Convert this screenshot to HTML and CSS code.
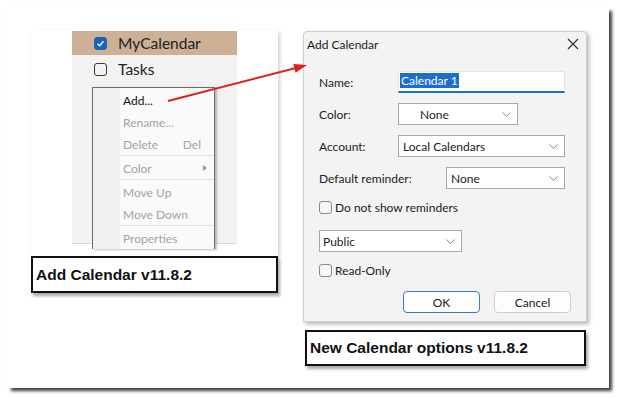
FILE: index.html
```html
<!DOCTYPE html>
<html lang="en">

<head>
    <meta charset="UTF-8">
    <meta name="viewport" content="width=device-width, initial-scale=1.0">
    <title>Add Calendar</title>
    <link rel="stylesheet" href="styles.css">
</head>

<body>
    <div class="sheet">
        <!-- Left: calendar list with context menu -->
        <div class="col col-left">
            <div class="card">
                <div class="panel">
                    <div class="cal-row selected">
                        <span class="check on">
                            <svg width="9" height="9" viewBox="0 0 9 9"><polyline points="1.5,4.8 3.6,6.8 7.5,2.2" fill="none" stroke="#fff" stroke-width="1.4"/></svg>
                        </span>
                        <span>MyCalendar</span>
                    </div>
                    <div class="cal-row tasks">
                        <span class="check"></span>
                        <span>Tasks</span>
                    </div>
                    <div class="menu">
                        <div class="menu-item active">Add...</div>
                        <div class="menu-item">Rename...</div>
                        <div class="menu-item">Delete <span class="shortcut">Del</span></div>
                        <div class="menu-sep"></div>
                        <div class="menu-item">Color <span class="submenu"></span></div>
                        <div class="menu-sep"></div>
                        <div class="menu-item">Move Up</div>
                        <div class="menu-item">Move Down</div>
                        <div class="menu-sep"></div>
                        <div class="menu-item">Properties</div>
                    </div>
                </div>
            </div>
            <div class="caption">Add Calendar v11.8.2</div>
        </div>

        <!-- Right: Add Calendar dialog -->
        <div class="col col-right">
            <div class="dialog">
                <div class="dialog-title">
                    <span>Add Calendar</span>
                    <svg width="12" height="12" viewBox="0 0 12 12"><path d="M1 1 L11 11 M11 1 L1 11" stroke="#333" stroke-width="1.2"/></svg>
                </div>
                <div class="dialog-body">
                    <div class="field row-name">
                        <label>Name:</label>
                        <div class="input"><span class="sel">Calendar 1</span></div>
                    </div>
                    <div class="field">
                        <label>Color:</label>
                        <div class="select select-color"><span>None</span><svg class="chev" width="9" height="5" viewBox="0 0 9 5"><polyline points="0.5,0.5 4.5,4.3 8.5,0.5" fill="none" stroke="#888"/></svg></div>
                    </div>
                    <div class="field">
                        <label>Account:</label>
                        <div class="select select-wide"><span>Local Calendars</span><svg class="chev" width="9" height="5" viewBox="0 0 9 5"><polyline points="0.5,0.5 4.5,4.3 8.5,0.5" fill="none" stroke="#888"/></svg></div>
                    </div>
                    <div class="field row-reminder">
                        <label class="label-long">Default reminder:</label>
                        <div class="select select-reminder"><span>None</span><svg class="chev" width="9" height="5" viewBox="0 0 9 5"><polyline points="0.5,0.5 4.5,4.3 8.5,0.5" fill="none" stroke="#888"/></svg></div>
                    </div>
                    <div class="field row-check1">
                        <span class="box"></span><span>Do not show reminders</span>
                    </div>
                    <div class="field row-public">
                        <div class="select select-public"><span>Public</span><svg class="chev" width="9" height="5" viewBox="0 0 9 5"><polyline points="0.5,0.5 4.5,4.3 8.5,0.5" fill="none" stroke="#888"/></svg></div>
                    </div>
                    <div class="field row-check2">
                        <span class="box"></span><span>Read-Only</span>
                    </div>
                    <div class="buttons">
                        <button class="btn btn-ok">OK</button>
                        <button class="btn">Cancel</button>
                    </div>
                </div>
            </div>
            <div class="caption caption-right">New Calendar options v11.8.2</div>
        </div>

        <!-- red pointer arrow -->
        <svg class="arrow" width="601" height="380" viewBox="0 0 601 380">
            <line x1="160" y1="93" x2="288" y2="60" stroke="#e0201f" stroke-width="2"/>
            <polygon points="299,57 287.5,64.7 285.3,55.9" fill="#e0201f"/>
        </svg>
    </div>
</body>

</html>
```

FILE: styles.css
```css
/* Reset */
* {
    box-sizing: border-box;
}

body {
    margin: 0;
    background-color: #fff;
    font-family: Lato, "Open Sans", sans-serif;
    color: #222;
}

.sheet {
    position: relative;
    margin: 8px;
    width: 601px;
    height: 380px;
    padding: 22px 0 0 23px;
    display: flex;
    align-items: flex-start;
    gap: 25px;
    background-color: #fff;
    box-shadow: 3px 3px 3px rgba(0, 0, 0, 0.75);
}

.col-left {
    width: 247px;
}

.col-right {
    width: 284px;
    margin-top: 1px;
}

/* Calendar list card */
.card {
    height: 226px;
    padding-top: 1px;
    background-color: #fff;
    box-shadow: 2px 2px 4px rgba(0, 0, 0, 0.18);
}

.panel {
    margin-left: 41px;
    width: 165px;
    height: 213px;
    background-color: #f2f2f2;
    border-bottom: 1px solid #d9d9d9;
}

.cal-row {
    display: flex;
    align-items: center;
    gap: 11px;
    height: 24px;
    padding-left: 22px;
    font-size: 15.5px;
    color: #222;
}

.cal-row.selected {
    background-color: #cdb096;
}

.cal-row.tasks {
    height: 28px;
}

.check {
    display: flex;
    align-items: center;
    justify-content: center;
    width: 13px;
    height: 13px;
    border: 1.5px solid #3a3a3a;
    border-radius: 3px;
}

.check.on {
    background-color: #1565c0;
    border-color: #1565c0;
}

/* Context menu */
.menu {
    margin-top: 4px;
    margin-left: 20px;
    width: 123px;
    height: 162px;
    padding-top: 1px;
    border: 1px solid #6d6d6d;
    border-bottom: none;
    background: linear-gradient(to right, #f0f0f0 27px, #fafafa 27px);
    box-shadow: 2px 1px 2px rgba(0, 0, 0, 0.25);
}

.menu-item {
    display: flex;
    justify-content: space-between;
    align-items: center;
    height: 22px;
    padding: 0 13px 0 30px;
    font-size: 12px;
    color: #a3a3a3;
}

.menu-item.active {
    color: #111;
}

.submenu {
    width: 0;
    height: 0;
    margin-right: -6px;
    border-top: 3px solid transparent;
    border-bottom: 3px solid transparent;
    border-left: 4px solid #999;
}

.menu-sep {
    height: 2px;
    margin-left: 27px;
    border-top: 1px solid #dedede;
}

/* Caption boxes */
.caption {
    display: flex;
    align-items: center;
    height: 37px;
    padding-left: 3px;
    background-color: #fff;
    border: 2px solid #111;
    font-family: "Liberation Sans", Arial, sans-serif;
    font-weight: bold;
    font-size: 15.5px;
    color: #111;
    box-shadow: 2px 3px 3px rgba(0, 0, 0, 0.35);
}

.caption-right {
    margin-top: 8px;
    margin-left: 2px;
    width: 281px;
    height: 36px;
}

/* Dialog */
.dialog {
    height: 291px;
    background-color: #f3f3f3;
    border: 1px solid #cfcfcf;
    border-radius: 4px 4px 0 0;
    box-shadow: 2px 2px 4px rgba(0, 0, 0, 0.3);
}

.dialog-title {
    display: flex;
    justify-content: space-between;
    align-items: center;
    height: 24px;
    padding: 0 7px 0 3px;
    font-size: 12px;
    color: #1a1a1a;
}

.dialog-body {
    padding: 15px 15px 0 15px;
    font-size: 12px;
    color: #222;
}

.field {
    display: flex;
    align-items: center;
    height: 22px;
    margin-bottom: 10px;
}

.field label {
    width: 79px;
}

.field .label-long {
    width: 127px;
}

.row-reminder {
    margin-bottom: 7px;
}

.row-check1 {
    margin-bottom: 12px;
}

.row-public {
    margin-bottom: 7px;
}

.input {
    width: 167px;
    height: 22px;
    padding: 1px 0 0 1px;
    background-color: #fff;
    border: 1px solid #e4e4e4;
    border-bottom: 2px solid #1a6fc2;
}

.sel {
    display: inline-block;
    line-height: 15px;
    padding: 0 1px;
    background-color: #1c6dd0;
    color: #fff;
}

.select {
    display: flex;
    justify-content: space-between;
    align-items: center;
    height: 22px;
    padding: 0 6px 0 4px;
    background-color: #fff;
    border: 1px solid #a8a8a8;
}

.select-color {
    width: 120px;
    padding-left: 21px;
}

.select-wide {
    width: 167px;
}

.select-reminder {
    width: 119px;
}

.select-public {
    width: 143px;
    padding-left: 3px;
}

.box {
    width: 13px;
    height: 13px;
    margin-right: 3px;
    background-color: #f7f7f7;
    border: 1px solid #8a8a8a;
    border-radius: 3px;
}

.buttons {
    display: flex;
    justify-content: flex-end;
    gap: 14px;
}

.btn {
    width: 77px;
    height: 22px;
    background-color: #fdfdfd;
    border: 1px solid #cfcfcf;
    border-radius: 4px;
    font-family: Lato, "Open Sans", sans-serif;
    font-size: 12px;
    color: #222;
}

.btn-ok {
    border-color: #3a7bc8;
}

/* Arrow over everything */
.arrow {
    position: absolute;
    left: 0;
    top: 0;
    pointer-events: none;
}
```
